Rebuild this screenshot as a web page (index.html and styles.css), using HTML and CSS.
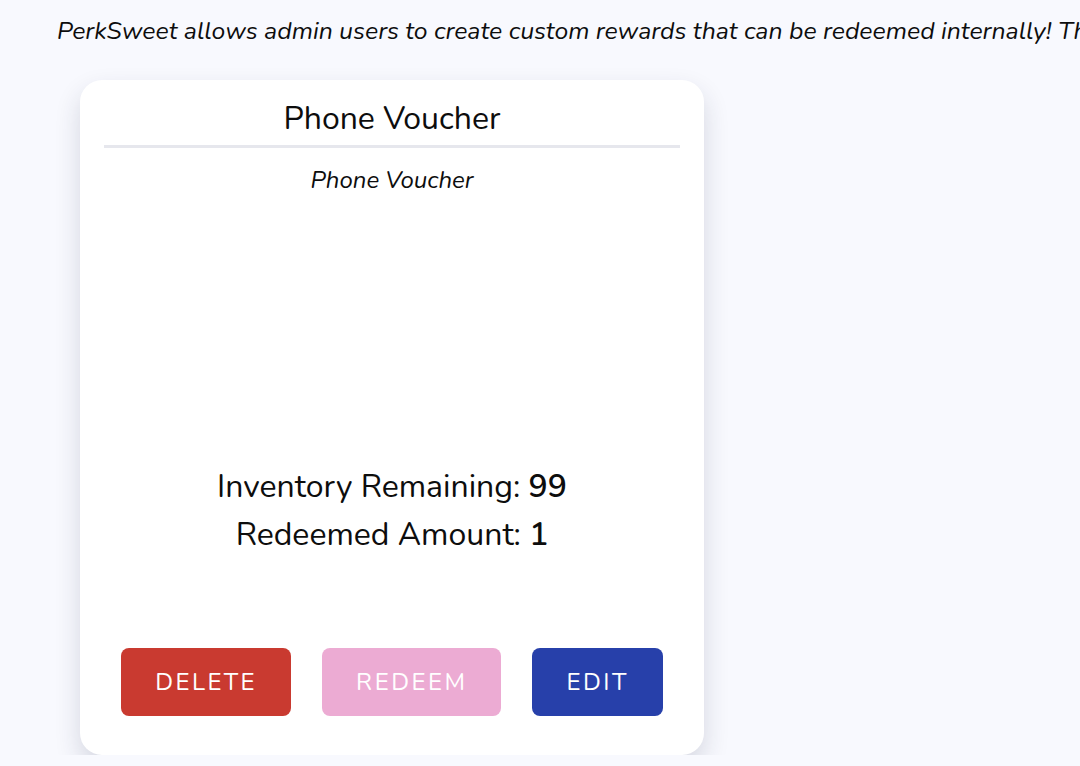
FILE: index.html
```html
<!DOCTYPE html>
<html>
<head>
<meta charset="utf-8">
<link rel="stylesheet" href="styles.css">
</head>
<body>
<main class="page">
  <section class="intro">
    <p class="intro-line cut">Rewards are a great way to say thank you to your employees.</p>
    <p class="intro-line">PerkSweet allows admin users to create custom rewards that can be redeemed internally! These rewards can be anything you like.</p>
  </section>
  <div class="rewards">
    <article class="card">
      <h2 class="card-title">Phone Voucher</h2>
      <p class="card-desc">Phone Voucher</p>
      <div class="card-stats">
        <p class="stat">Inventory Remaining: <b>99</b></p>
        <p class="stat">Redeemed Amount: <b>1</b></p>
      </div>
      <div class="card-actions">
        <button class="btn btn-delete">DELETE</button>
        <button class="btn btn-redeem">REDEEM</button>
        <button class="btn btn-edit">EDIT</button>
      </div>
    </article>
  </div>
</main>
</body>
</html>
```

FILE: styles.css
```css
html, body {
  margin: 0;
  padding: 0;
  background: #f8f9fe;
  overflow: hidden;
}
body {
  font-family: "Nunito", "Lato", "Open Sans", sans-serif;
  color: #0d0d0d;
}
.page {
  padding: 0 0 0 57px;
}
.intro {
  margin-top: -32px;
  white-space: nowrap;
}
.intro-line {
  margin: 0;
  font-style: italic;
  font-size: 24.8px;
  line-height: 34px;
}
.intro-line.cut {
  margin-bottom: 12px;
}
.rewards {
  display: flex;
  padding: 32px 0 0 23px;
}
.card {
  width: 624px;
  height: 675px;
  box-sizing: border-box;
  padding: 19px 24px 39px;
  background: #fff;
  border-radius: 22px;
  box-shadow: 0 12px 26px rgba(30, 40, 70, 0.16);
  display: flex;
  flex-direction: column;
  align-items: stretch;
  text-align: center;
}
.card-title {
  margin: 0;
  font-weight: 400;
  font-size: 32px;
  line-height: 40px;
  padding-bottom: 6px;
  border-bottom: 3px solid #e6e7ed;
}
.card-desc {
  margin: 16px 0 0;
  font-style: italic;
  font-size: 24px;
  line-height: 32px;
}
.card-stats {
  margin-top: auto;
  margin-bottom: 89px;
}
.stat {
  margin: 0;
  font-size: 32px;
  line-height: 48px;
}
.stat b {
  font-weight: 600;
}
.card-actions {
  display: flex;
  justify-content: center;
  gap: 31px;
}
.btn {
  height: 68px;
  padding: 0 34px;
  border: none;
  border-radius: 8px;
  color: #fff;
  font-family: inherit;
  font-size: 24px;
  letter-spacing: 2.5px;
  font-weight: 400;
}
.btn-delete { background: #c93a30; }
.btn-redeem { background: #ecabd3; }
.btn-edit { background: #2740aa; }
```
